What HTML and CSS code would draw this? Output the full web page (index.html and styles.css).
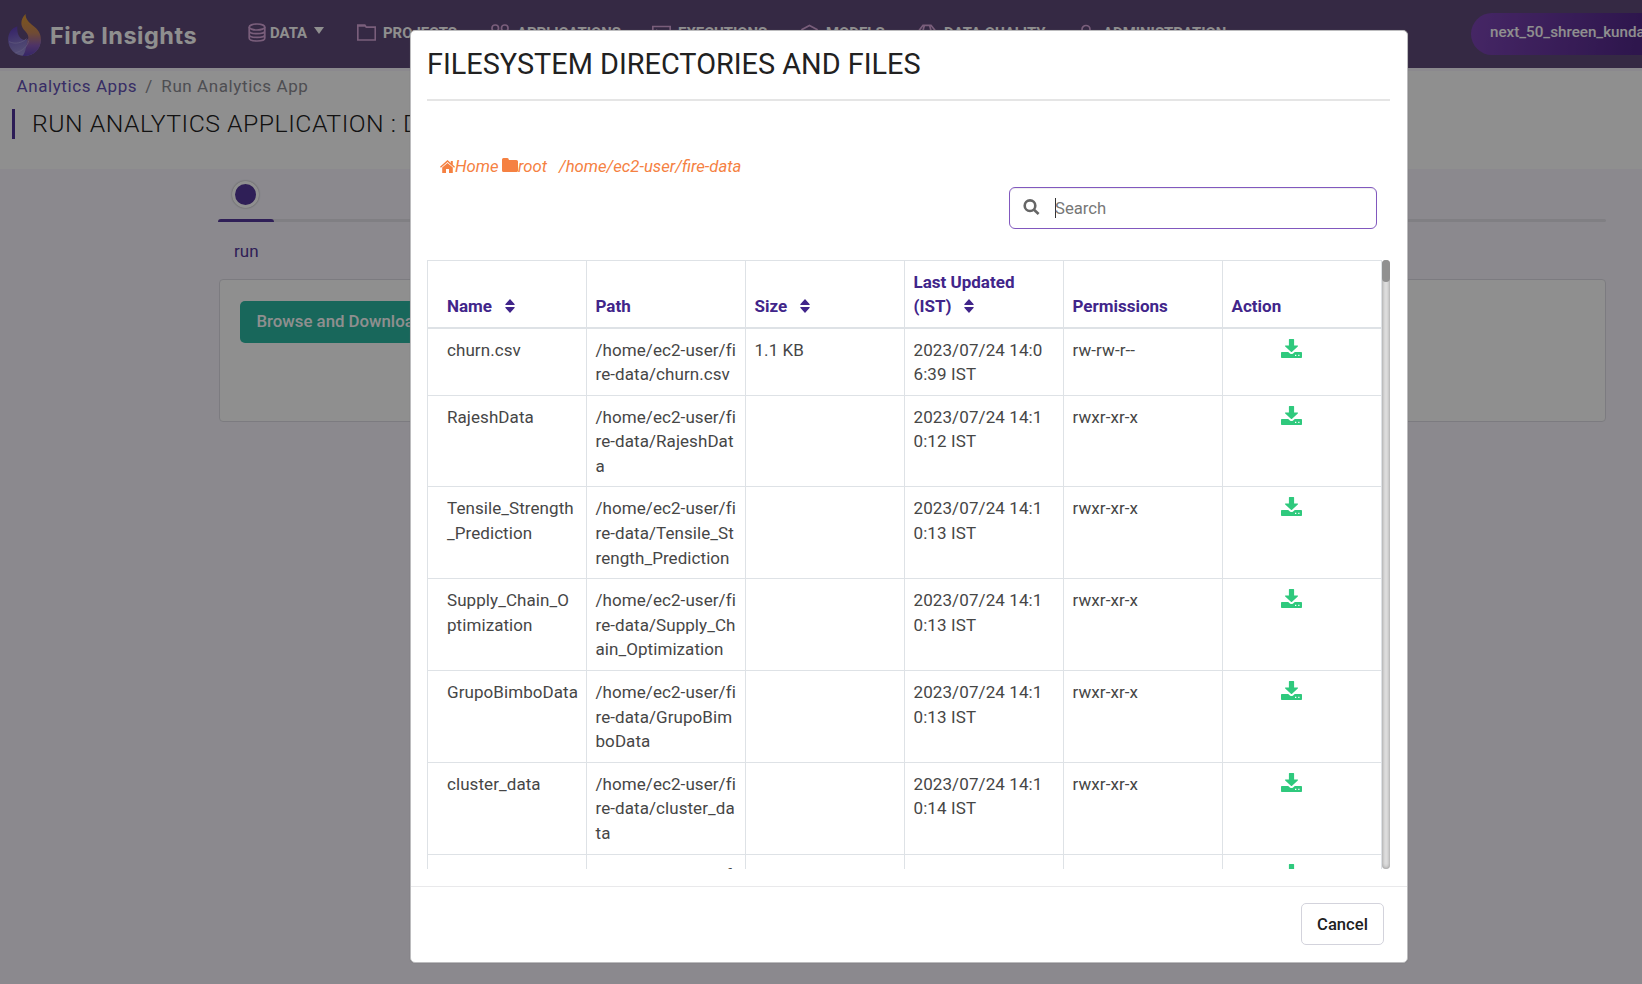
FILE: index.html
```html
<!DOCTYPE html>
<html lang="en">
<head>
<meta charset="utf-8">
<title>Fire Insights</title>
<link rel="stylesheet" href="styles.css">
</head>
<body>
<svg class="defs" width="0" height="0">
  <symbol id="download" viewBox="0 0 21 19"><path d="M8.5 0h4a.6.6 0 0 1 .6.6V6.500h3.300q1.200 0 .4.900l-5.700 5.300q-.6.500-1.200 0L4.200 7.400q-.8-.9.4-.9h3.300V.6a.6.600 0 0 1 .6-.6z"/><path fill-rule="evenodd" d="M.8 13h6.400l1.700 1.500q1.600 1.200 3.200 0L13.800 13h6.400q.8 0 .8.800v4.400q0 .8-.8.800H.8q-.8 0-.8-.8v-4.400Q0 13 .8 13zM14 15.800v1.300h1.300v-1.300zm3.200 0v1.300h1.300v-1.300z"/></symbol>
  <symbol id="sort" viewBox="0 0 10 14"><path d="M5 0l4.700 5.200q.3.800-.5.800H.8q-.8 0-.5-.8zM5 14L.3 8.800Q0 8 .8 8h8.400q.8 0 .5.800z"/></symbol>
</svg>
<div class="page">
  <header class="navbar">
    <svg class="logo" viewBox="0 0 32 41">
      <defs>
        <linearGradient id="flame" x1="0" y1="0" x2="0" y2="1"><stop offset="0" stop-color="#e09a30"/><stop offset=".45" stop-color="#c8865c"/><stop offset=".75" stop-color="#8a5bb8"/><stop offset="1" stop-color="#6044b8"/></linearGradient>
        <linearGradient id="drop" x1="0" y1="0" x2="0.300" y2="1"><stop offset="0" stop-color="#5a36b8"/><stop offset=".6" stop-color="#8474c8"/><stop offset="1" stop-color="#9a90d4"/></linearGradient>
      </defs>
      <path fill="url(#drop)" d="M9 12C3 14 0 19 0 25c0 9 7 16 16 16s16-7 16-16l-12-1c-5 4-12-1-11-12z"/>
      <path fill="url(#flame)" d="M17 0c-5 5-5 11-2 15 4 4 6 7 4 11-2 5-1 10-5 15 10 1 18-6 18-16 0-6-3-10-7-13-5-4-8-7-8-12z"/>
      <path fill="none" stroke="#b4a8e4" stroke-width=".6" d="M1 27c6 3 13 1 17-3M7 38c7-2 12-6 13-12"/>
    </svg>
    <span class="brand">Fire Insights</span>
    <nav class="menu">
      <a class="item data"><svg viewBox="0 0 18 19"><ellipse cx="9" cy="4" rx="7.800" ry="3"/><path d="M1.200 4v11c0 1.800 3.300 3 7.800 3s7.800-1.200 7.800-3V4M1.200 7.700c0 1.800 3.300 3 7.800 3s7.800-1.200 7.800-3M1.200 11.400c0 1.800 3.300 3 7.800 3s7.800-1.200 7.800-3"/></svg><span>DATA</span><i class="caret"></i></a>
      <a class="item projects"><svg viewBox="0 0 19 19"><path d="M.8 17V2.200h7l1.500 2h9V17zM.8 3h7.500"/></svg><span>PROJECTS</span></a>
      <a class="item apps"><svg viewBox="0 0 19 19"><rect x="1" y="2" width="6.500" height="6.500" rx="3"/><rect x="10.500" y="2" width="6.500" height="6.500" rx="3"/><rect x="1" y="11" width="6.500" height="6.500" rx="3"/><rect x="10.500" y="11" width="6.500" height="6.500" rx="3"/></svg><span>APPLICATIONS</span></a>
      <a class="item exec"><svg viewBox="0 0 19 19"><path d="M.8 3.500h17.400v12H.8zM4 7l3 2-3 2"/></svg><span>EXECUTIONS</span></a>
      <a class="item models"><svg viewBox="0 0 19 19"><path d="M9.500 2.500l7.500 4v8l-7.500 4L2 14.500v-8z"/></svg><span>MODELS</span></a>
      <a class="item quality"><svg viewBox="0 0 19 19"><path d="M5 2.300h8L17.500 8 9 17.500.7 8zM6.500 2.300Q5.500 5 5 8l4 9 4-9q-.5-3-1.500-5.700M.7 8h16.800"/></svg><span>DATA QUALITY</span></a>
      <a class="item admin"><svg viewBox="0 0 19 19"><circle cx="9" cy="6.500" r="4"/><path d="M1.500 18c0-9 15-9 15 0"/></svg><span>ADMINISTRATION</span></a>
    </nav>
    <div class="user">next_50_shreen_kunda</div>
  </header>
  <section class="heading">
    <div class="crumbs"><a>Analytics Apps</a><span class="slash">/</span><span class="here">Run Analytics App</span></div>
    <h1>RUN ANALYTICS APPLICATION : DOWNLOAD</h1>
  </section>
  <main class="wizard">
    <div class="steps"><span class="dot"></span></div>
    <div class="track"><div class="progress"></div></div>
    <div class="step-name">run</div>
    <div class="panel"><button class="browse">Browse and Download</button></div>
  </main>
</div>
<div class="backdrop">
  <div class="modal">
    <div class="modal-body">
      <h2>FILESYSTEM DIRECTORIES AND FILES</h2>
      <div class="path">
        <svg class="home" viewBox="0 0 15 13"><path d="M7.500 0L0 6.700l.9 1L7.500 1.900l6.600 5.800.9-1-2.200-2V.9h-2v2zM7.500 3L2.200 7.600V13H6V9h3v4h3.800V7.600z"/></svg><span class="p-home">Home</span><svg class="folder" viewBox="0 0 16 14"><path d="M0 1.500Q0 0 1.500 0h3.800q1.500 0 1.500 1.500V2h7.500Q16 2 16 3.600v8.900q0 1.500-1.500 1.500h-13Q0 14 0 12.500z"/></svg><span class="p-root">root</span><span class="p-full">/home/ec2-user/fire-data</span>
      </div>
      <div class="search"><svg viewBox="0 0 17 16"><circle cx="7" cy="6.700" r="5.300"/><path d="M11 10.700l4.600 4.300"/></svg><span class="cursor"></span><span class="hint">Search</span></div>
      <div class="scroll">
        <table>
          <thead><tr><th>Name<svg class="sort"><use href="#sort"/></svg></th><th>Path</th><th>Size<svg class="sort"><use href="#sort"/></svg></th><th>Last Updated (IST)<svg class="sort"><use href="#sort"/></svg></th><th>Permissions</th><th>Action</th></tr></thead>
          <tbody>
            <tr><td>churn.csv</td><td>/home/ec2-user/fire-data/churn.csv</td><td>1.1 KB</td><td>2023/07/24 14:06:39 IST</td><td>rw-rw-r--</td><td><svg class="dl"><use href="#download"/></svg></td></tr>
            <tr><td>RajeshData</td><td>/home/ec2-user/fire-data/RajeshData</td><td></td><td>2023/07/24 14:10:12 IST</td><td>rwxr-xr-x</td><td><svg class="dl"><use href="#download"/></svg></td></tr>
            <tr><td>Tensile_Strength_Prediction</td><td>/home/ec2-user/fire-data/Tensile_Strength_Prediction</td><td></td><td>2023/07/24 14:10:13 IST</td><td>rwxr-xr-x</td><td><svg class="dl"><use href="#download"/></svg></td></tr>
            <tr><td>Supply_Chain_O<br>ptimization</td><td>/home/ec2-user/fire-data/Supply_Chain_Optimization</td><td></td><td>2023/07/24 14:10:13 IST</td><td>rwxr-xr-x</td><td><svg class="dl"><use href="#download"/></svg></td></tr>
            <tr><td>GrupoBimboData</td><td>/home/ec2-user/fire-data/GrupoBimboData</td><td></td><td>2023/07/24 14:10:13 IST</td><td>rwxr-xr-x</td><td><svg class="dl"><use href="#download"/></svg></td></tr>
            <tr><td>cluster_data</td><td>/home/ec2-user/fire-data/cluster_data</td><td></td><td>2023/07/24 14:10:14 IST</td><td>rwxr-xr-x</td><td><svg class="dl"><use href="#download"/></svg></td></tr>
            <tr class="partial"><td>kken</td><td>/home/ec2-user/fire-data/kken</td><td></td><td></td><td></td><td><svg class="dl"><use href="#download"/></svg></td></tr>
          </tbody>
        </table>
        <div class="rail"><div class="thumb"></div></div>
      </div>
    </div>
    <footer class="modal-foot"><button class="cancel">Cancel</button></footer>
  </div>
</div>
</body>
</html>
```
FILE: styles.css
```css
* { box-sizing: border-box; }
html, body { margin: 0; height: 984px; overflow: hidden; }
body { font-family: Roboto, sans-serif; font-size: 17px; color: #464646; background: #f8f5fe; }
.defs { position: absolute; }
.page { height: 984px; width: 1642px; overflow: hidden; }

/* top bar */
.navbar { display: flex; align-items: flex-start; height: 68px; background: #5f4979; overflow: hidden; }
.logo { width: 33px; height: 42px; margin: 13.500px 0 0 8px; flex: none; }
.brand { width: 150px; margin: 19px 0 0 9px; flex: none; font: 700 23.500px/34px Inter, sans-serif; letter-spacing: .5px; color: #fff; white-space: nowrap; }
.menu { display: flex; height: 68px; margin-left: 48px; flex: none; }
.item { display: flex; align-items: flex-start; padding-top: 23px; flex: none; color: #fff; font-size: 14.900px; font-weight: 700; line-height: 20px; white-space: nowrap; }
.item svg { width: 19px; height: 19px; flex: none; fill: none; stroke: #d9a8dc; stroke-width: 1.700; }
.item span { margin-left: 7px; }
.item.data { width: 109px; }
.item.data svg { width: 18px; }
.item.data span { margin-left: 4px; }
.caret { margin: 4px 0 0 7px; border: 5px solid transparent; border-top: 7px solid #fff; border-bottom: 0; }
.item.projects { width: 134px; }
.item.apps { width: 161px; }
.item.exec { width: 148px; }
.item.models { width: 118px; }
.item.quality { width: 159px; }
.user { width: 300px; height: 42px; margin: 13px -129px 0 auto; flex: none; padding-left: 19px; border-radius: 21px; background: linear-gradient(100deg, #7d45b5, #53288a 55%); color: #fff; font-size: 15.200px; font-weight: 500; line-height: 38px; }

/* page heading */
.heading { height: 98px; margin-top: 3px; padding: 1px 12px; background: #fff; }
.crumbs { padding-left: 4.500px; color: #8b8b93; font-size: 17px; line-height: 29px; letter-spacing: .59px; }
.crumbs a { color: #6450b4; }
.slash { margin: 0 8.500px 0 8px; }
h1 { width: 1000px; height: 30px; margin: 8px 0 0; padding-left: 17px; border-left: 3px solid #4f3399; color: #212121; font-size: 24.800px; font-weight: 350; line-height: 30px; letter-spacing: .5px; white-space: nowrap; }

/* wizard */
.wizard { width: 1388px; margin-left: 218px; }
.steps { height: 50px; padding: 12px 0 0 14px; }
.dot { display: block; width: 27px; height: 27px; border: 3px solid #fff; border-radius: 50%; background: #55389b; box-shadow: 0 0 2px #999; }
.track { height: 3px; border-radius: 2px; background: #e4e2ea; }
.progress { width: 56px; height: 3px; border-radius: 3px 3px 0 0; background: #55389b; }
.step-name { height: 57px; padding-left: 16px; color: #55389b; line-height: 59px; }
.panel { height: 143px; margin-left: 1px; padding: 21px 20px; border: 1px solid #dedce4; border-radius: 4px; background: #fff; }
.browse { width: 220px; height: 42px; padding: 0 17px 2px 16.500px; border: 0; border-radius: 5px; background: #2bb8a3; color: #fff; font: 500 16.800px Roboto, sans-serif; text-align: left; white-space: nowrap; }

/* dialog */
.backdrop { position: absolute; top: 0; left: 0; width: 1642px; height: 984px; padding: 30px 0 0 410px; background: rgba(0, 0, 0, .44); }
.modal { display: flex; flex-direction: column; width: 998px; height: 933px; border: 1px solid #bcbcbe; border-radius: 5px; background: #fff; box-shadow: 0 0 1px #666; }
.modal-body { height: 855px; padding: 0 17px 0 16px; }
h2 { height: 70px; margin: 0; border-bottom: 2px solid #e5e5e5; color: #212121; font-size: 28.850px; font-weight: 400; line-height: 66px; white-space: nowrap; }
.path { display: flex; align-items: center; height: 30px; margin-top: 50px; padding-left: 13px; color: #f58142; font-size: 16.700px; font-style: italic; }
.path svg { flex: none; fill: #f58142; }
.home { width: 15px; height: 13px; }
.folder { width: 16px; height: 14px; margin: -2px 0 0; }
.p-home { width: 47px; }
.p-root { width: 41px; }
.search { display: flex; align-items: center; width: 368px; height: 42px; margin: 6px 0 0 582px; padding-left: 13px; border: 1px solid #8158be; border-radius: 6px; color: #777; font-size: 16.700px; box-shadow: inset 0 1px 1px #eee; }
.search svg { width: 17px; height: 16px; margin-top: -2px; fill: none; stroke: #666; stroke-width: 2.600; }
.cursor { width: 1px; height: 20px; margin: 0 -1px 0 15px; background: #333; }
.scroll { display: flex; width: 963px; height: 609px; margin-top: 31px; overflow: hidden; }
table { width: 955px; flex: none; border-collapse: collapse; table-layout: fixed; align-self: flex-start; }
th, td { padding: 9px 7.500px 8px 8.500px; border: 1px solid #dee2e6; text-align: left; line-height: 24.600px; word-break: break-all; }
th { height: 67px; padding-top: 8px; border-bottom-width: 2px; color: #41258a; font-weight: 700; line-height: 24.300px; vertical-align: bottom; word-break: normal; }
td { vertical-align: top; letter-spacing: .07px; }
th:first-child, td:first-child { padding-left: 19px; }
td:nth-child(4) { padding-right: 14px; letter-spacing: .1px; }
.partial td { padding-top: 8px; }
.sort { width: 10px; height: 14px; margin-left: 12.500px; vertical-align: -1px; fill: #41258a; }
td:last-child { text-align: center; padding-right: 29px; }
.dl { display: inline-block; width: 21px; height: 19px; vertical-align: -2px; fill: #2fc97d; }
.rail { width: 8px; height: 609px; border-radius: 4px; background: #e2e2e2; box-shadow: inset 0 0 4px #888; }
.thumb { height: 22px; border-radius: 4px; background: #909090; }
.modal-foot { display: flex; justify-content: flex-end; height: 76px; padding: 16px 23px 0 0; border-top: 1px solid #e9e9eb; }
.cancel { width: 83px; height: 42px; padding: 0; border: 1px solid #d3d3dc; border-radius: 5px; background: #fff; color: #212121; font: 500 16.600px Roboto, sans-serif; }
```
